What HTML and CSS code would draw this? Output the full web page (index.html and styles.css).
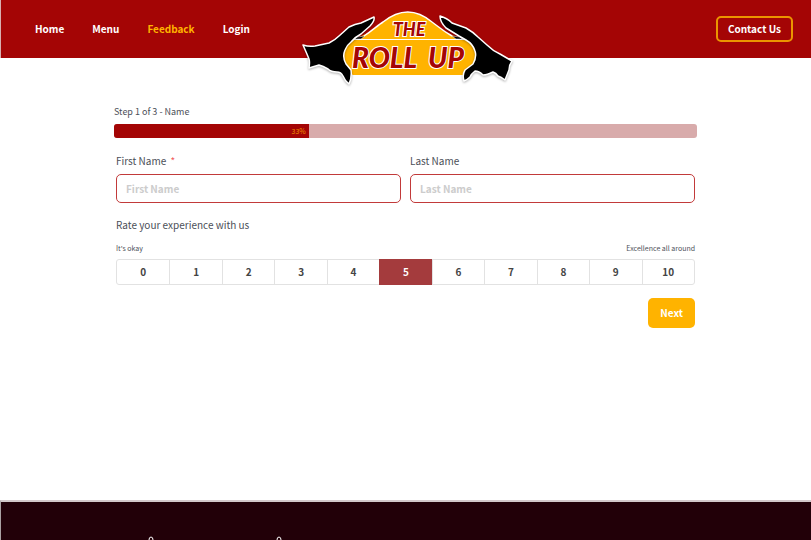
FILE: index.html
```html
<!DOCTYPE html>
<html lang="en">
<head>
  <meta charset="UTF-8">
  <meta name="viewport" content="width=device-width, initial-scale=1.0">
  <title>Feedback | The Roll Up</title>
  <link rel="stylesheet" href="styles.css">
</head>
<body>
  <header class="site-header">
    <nav class="main-nav">
      <a href="#">Home</a>
      <a href="#">Menu</a>
      <a href="#" class="active">Feedback</a>
      <a href="#">Login</a>
    </nav>
    <a href="#" class="logo" aria-label="The Roll Up">
      <svg width="225" height="95" viewBox="0 0 225 95">
        <!-- Wrap -->
        <path d="M58 75 C46 67 46 47 57 40 C67 37 78 30 88 22 Q113 2 137 22 C147 30 157 37 171 40 C184 47 184 67 170 75 Z" fill="#ffb300"/>
        <path d="M69 36 C78 30 83 25 88 22 Q113 2 137 22 C144 27 148 31 157 36" fill="none" stroke="#fff" stroke-width="1.5"/>
        <path d="M58 39.5H171" stroke="#fff" stroke-width="1"/>
        <path d="M62 37l8-1-4 3h-6zM157 36l8 1 2 2h-6z" fill="#000" stroke="#fff" stroke-width=".5"/>
        <!-- Hands -->
        <g class="hands">
          <path d="M8 45Q14 47 20 46L34 43Q40 40 44 36L54 27Q60 24 66 23L79 17Q80 21 75 26L66 34Q60 37 56 42Q52 45 50 50Q47 57 51 64L56 70Q57 78 54 84Q50 81 48 76Q46 72 42 72Q36 72 33 69Q28 66 24 65L14 68Q15 62 14 59Q12 54 8 45Z"/>
          <path d="M145 16Q152 18 157 23L171 28Q178 32 183 37L192 45Q198 51 205 54L217 61Q214 65 214 70L210 80Q206 77 203 76Q201 73 198 72Q192 75 188 75Q184 71 180 71Q176 74 175 77Q172 80 169 81Q167 75 170 70L178 64Q182 57 180 51Q178 44 171 40L164 36 151 28Q145 22 145 16Z"/>
        </g>
        <text class="logo-small" x="114" y="36" text-anchor="middle">THE</text>
        <text class="logo-big" x="57" y="68">ROLL</text>
        <text class="logo-big" x="133" y="68">UP</text>
      </svg>
    </a>
    <a href="#" class="contact-btn">Contact Us</a>
  </header>

  <main class="content">
    <form class="feedback-form">
      <p class="step" id="step">Step 1 of 3 - Name</p>
      <div class="progress" role="progressbar" aria-labelledby="step" aria-valuenow="33" aria-valuemin="0" aria-valuemax="100">
        <div class="progress-bar" style="width: 33.4%">33%</div>
      </div>
      <div class="fields">
        <div class="name-row">
          <div class="field">
            <label for="first">First Name <span class="required">*</span></label>
            <input type="text" id="first" placeholder="First Name" required>
          </div>
          <div class="field">
            <label for="last">Last Name</label>
            <input type="text" id="last" placeholder="Last Name">
          </div>
        </div>
        <fieldset class="rating">
          <legend>Rate your experience with us</legend>
          <div class="hints"><span>It's okay</span><span>Excellence all around</span></div>
          <div class="scale">
            <label><input type="radio" name="rate" value="0">0</label>
            <label><input type="radio" name="rate" value="1">1</label>
            <label><input type="radio" name="rate" value="2">2</label>
            <label><input type="radio" name="rate" value="3">3</label>
            <label><input type="radio" name="rate" value="4">4</label>
            <label><input type="radio" name="rate" value="5" checked>5</label>
            <label><input type="radio" name="rate" value="6">6</label>
            <label><input type="radio" name="rate" value="7">7</label>
            <label><input type="radio" name="rate" value="8">8</label>
            <label><input type="radio" name="rate" value="9">9</label>
            <label><input type="radio" name="rate" value="10">10</label>
          </div>
        </fieldset>
        <div class="actions">
          <button type="button" class="next-btn">Next</button>
        </div>
      </div>
    </form>
  </main>

  <footer class="site-footer">
    <svg width="140" height="4" viewBox="0 0 140 4" fill="none" stroke="#fff" aria-hidden="true">
      <path d="M1 4Q1 1 3 1T5 4M129 4Q129 1 131 1T133 4"/>
    </svg>
  </footer>
</body>
</html>
```

FILE: styles.css
```css
* {
  box-sizing: border-box;
}
body {
  margin: 0;
  min-height: 100vh;
  display: flex;
  flex-direction: column;
  font-family: "Noto Sans CJK JP", "Noto Sans", sans-serif;
  font-size: 10px;
  line-height: 16px;
  color: #4c4f58;
  background-color: #fff;
}
a {
  color: #fff;
  font-weight: bold;
  text-decoration: none;
}

/* Header */
.site-header {
  display: grid;
  grid-template-columns: 1fr auto 1fr;
  align-items: center;
  height: 58px;
  padding: 0 18px 0 20px;
  background-color: #a40505;
  border-left: 1px solid #d8b0b0;
}
.main-nav {
  display: flex;
  gap: 28px;
  padding-left: 14px;
}
.main-nav .active {
  color: #ffb300;
}
/* The logo hangs over the bottom edge of the header */
.logo {
  align-self: start;
  height: 58px;
}
.logo svg {
  display: block;
}
.hands {
  fill: #000;
  stroke: #fff;
  stroke-width: 1.5;
  stroke-linejoin: round;
  filter: drop-shadow(0 1px 1px rgba(0, 0, 0, 0.3));
}
.logo-small,
.logo-big {
  font-family: Lato, "Liberation Sans", sans-serif;
  font-weight: 900;
  font-style: italic;
  fill: #a40505;
  stroke: #fff;
  stroke-width: 2;
  paint-order: stroke;
}
.logo-small {
  font-size: 18px;
}
.logo-big {
  font-size: 28px;
}
.contact-btn {
  justify-self: end;
  padding: 2px 10px;
  border: 2px solid #eb9500;
  border-radius: 5px;
  line-height: 18px;
}

/* Form */
.content {
  flex: 1;
  padding: 46px 114px 0;
}
.step {
  margin: 0 0 4px;
  font-size: 9px;
}
.progress {
  height: 14px;
  overflow: hidden;
  border-radius: 3px;
  background-color: #d8abab;
}
.progress-bar {
  height: 14px;
  padding-right: 3px;
  background-color: #a40505;
  color: #f09000;
  font-size: 7px;
  line-height: 14px;
  text-align: right;
}
.fields {
  padding: 15px 2px 0;
}
.name-row {
  display: grid;
  grid-template-columns: 1fr 1fr;
  gap: 9px;
}
.field label {
  display: block;
  margin-bottom: 5px;
}
.required {
  margin-left: 2px;
  color: #f25c5c;
}
.field input {
  display: block;
  width: 100%;
  height: 29px;
  padding: 0 9px;
  border: 1px solid #c23a3a;
  border-radius: 5px;
  font: bold 10px "Noto Sans CJK JP", "Noto Sans", sans-serif;
}
.field input::placeholder {
  color: #ccc;
}
.rating {
  margin: 14px 0 0;
  padding: 0;
  border: 0;
}
.rating legend {
  padding: 0;
}
.hints {
  display: flex;
  justify-content: space-between;
  margin: 7px 0 3px;
  font-size: 7px;
}
.scale {
  display: grid;
  grid-template-columns: repeat(11, 1fr);
  border: 1px solid #e2e2e2;
  border-radius: 3px;
}
.scale label {
  position: relative;
  border-left: 1px solid #e2e2e2;
  color: #444;
  font-weight: bold;
  line-height: 24px;
  text-align: center;
}
.scale label:first-child {
  border-left: 0;
}
.scale input {
  position: absolute;
  opacity: 0;
}
.scale label:has(:checked) {
  margin: -1px 0;
  border-color: #a43b3d;
  background-color: #a43b3d;
  color: #fff;
  line-height: 26px;
}
.actions {
  display: flex;
  justify-content: flex-end;
  margin-top: 13px;
}
.next-btn {
  padding: 6px 12px;
  border: 0;
  border-radius: 5px;
  background-color: #ffb300;
  color: #fff;
  font: bold 10px/18px "Noto Sans CJK JP", "Noto Sans", sans-serif;
}

/* Footer */
.site-footer {
  height: 40px;
  padding: 34px 147px 0;
  border-top: 2px solid #d3c8ca;
  border-left: 1px solid #aaa0a2;
  background-color: #220008;
}
.site-footer svg {
  display: block;
}
```
